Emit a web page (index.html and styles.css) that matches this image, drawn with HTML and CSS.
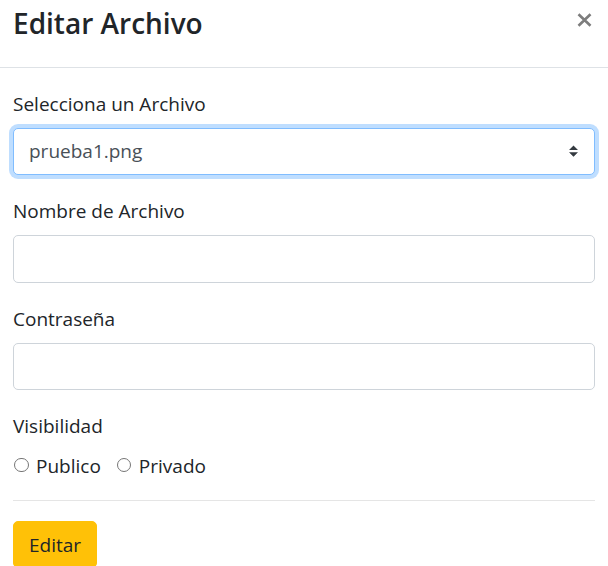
FILE: index.html
```html
<!DOCTYPE html>
<html lang="es">
<head>
<meta charset="utf-8">
<title>Editar Archivo</title>
<link rel="stylesheet" href="styles.css">
</head>
<body>
<div class="modal">
  <div class="modal-header">
    <h3 class="modal-title">Editar Archivo</h3>
    <button class="close" type="button" aria-label="Cerrar">
      <svg width="15" height="14" viewBox="0 0 15 14"><path d="M1.5 1.2L13.5 12.8M13.5 1.2L1.5 12.8" stroke="#7d7d7d" stroke-width="2.6" stroke-linecap="butt" fill="none"/></svg>
    </button>
  </div>
  <div class="modal-body">
    <div class="form-group">
      <label class="label">Selecciona un Archivo</label>
      <select class="custom-select"><option>prueba1.png</option></select>
    </div>
    <div class="form-group">
      <label class="label">Nombre de Archivo</label>
      <input class="form-control" type="text">
    </div>
    <div class="form-group">
      <label class="label">Contraseña</label>
      <input class="form-control" type="password">
    </div>
    <div class="form-group">
      <label class="label">Visibilidad</label>
      <div class="radios">
        <label class="form-check"><input class="radio" type="radio" name="vis"><span>Publico</span></label>
        <label class="form-check"><input class="radio" type="radio" name="vis"><span>Privado</span></label>
      </div>
    </div>
    <hr class="divider">
    <button class="btn-warning" type="button">Editar</button>
  </div>
</div>
</body>
</html>
```
FILE: styles.css
```css
html, body {
  margin: 0;
  padding: 0;
  background: #ffffff;
}
body {
  font-family: "Open Sans", "Noto Sans", sans-serif;
  font-size: 19px;
  color: #212529;
  overflow: hidden;
}
.modal {
  width: 608px;
}
.modal-header {
  display: flex;
  justify-content: space-between;
  align-items: flex-start;
  height: 60px;
  padding: 7px 13px 0 13px;
  border-bottom: 1px solid #dee2e6;
}
.modal-title {
  margin: 0;
  font-size: 28px;
  font-weight: 600;
  line-height: 33.6px;
  color: #212529;
}
.close {
  margin: 6px 3px 0 0;
  padding: 0;
  border: 0;
  background: transparent;
  line-height: 0;
  cursor: pointer;
}
.modal-body {
  padding: 19.5px 13px 0 13px;
}
.form-group {
  margin-bottom: 20px;
}
.label {
  display: block;
  line-height: 30px;
  padding-top: 1px;
  margin-bottom: 9px;
}
.custom-select,
.form-control {
  display: block;
  box-sizing: border-box;
  width: 100%;
  height: 47.5px;
  margin: 0;
  font-family: inherit;
  font-size: 19px;
  color: #495057;
  background-color: #fff;
  border: 1px solid #ced4da;
  border-radius: 5px;
  padding: 0 15px;
  outline: none;
}
.custom-select {
  -webkit-appearance: none;
  appearance: none;
  padding-right: 35px;
  border-color: #80bdff;
  box-shadow: 0 0 0 4px rgba(0, 123, 255, 0.25);
  background-image: url("data:image/svg+xml,%3csvg xmlns='http://www.w3.org/2000/svg' width='4' height='5' viewBox='0 0 4 5'%3e%3cpath fill='%23343a40' d='M2 0L0 2h4zm0 5L0 3h4z'/%3e%3c/svg%3e");
  background-repeat: no-repeat;
  background-position: right 16px center;
  background-size: 9px 12px;
}
.radios {
  display: flex;
  height: 30px;
  align-items: center;
}
.form-check {
  display: inline-flex;
  align-items: center;
  margin-right: 15px;
  line-height: 30px;
}
.form-check span {
  padding-top: 1px;
}
.radio {
  -webkit-appearance: none;
  appearance: none;
  box-sizing: border-box;
  width: 14.5px;
  height: 14.5px;
  margin: 0 7.5px 0 1px;
  border: 1px solid #767676;
  border-radius: 50%;
  background: #fff;
}
.divider {
  margin: 0 0 20px 0;
  border: 0;
  border-top: 1px solid rgba(0, 0, 0, 0.1);
  height: 0;
}
.btn-warning {
  display: inline-block;
  font-family: inherit;
  font-size: 19px;
  line-height: 30px;
  color: #212529;
  background-color: #ffc107;
  border: 1px solid #ffc107;
  border-radius: 5px;
  padding: 7.5px 15px;
  margin: 0;
}
```
